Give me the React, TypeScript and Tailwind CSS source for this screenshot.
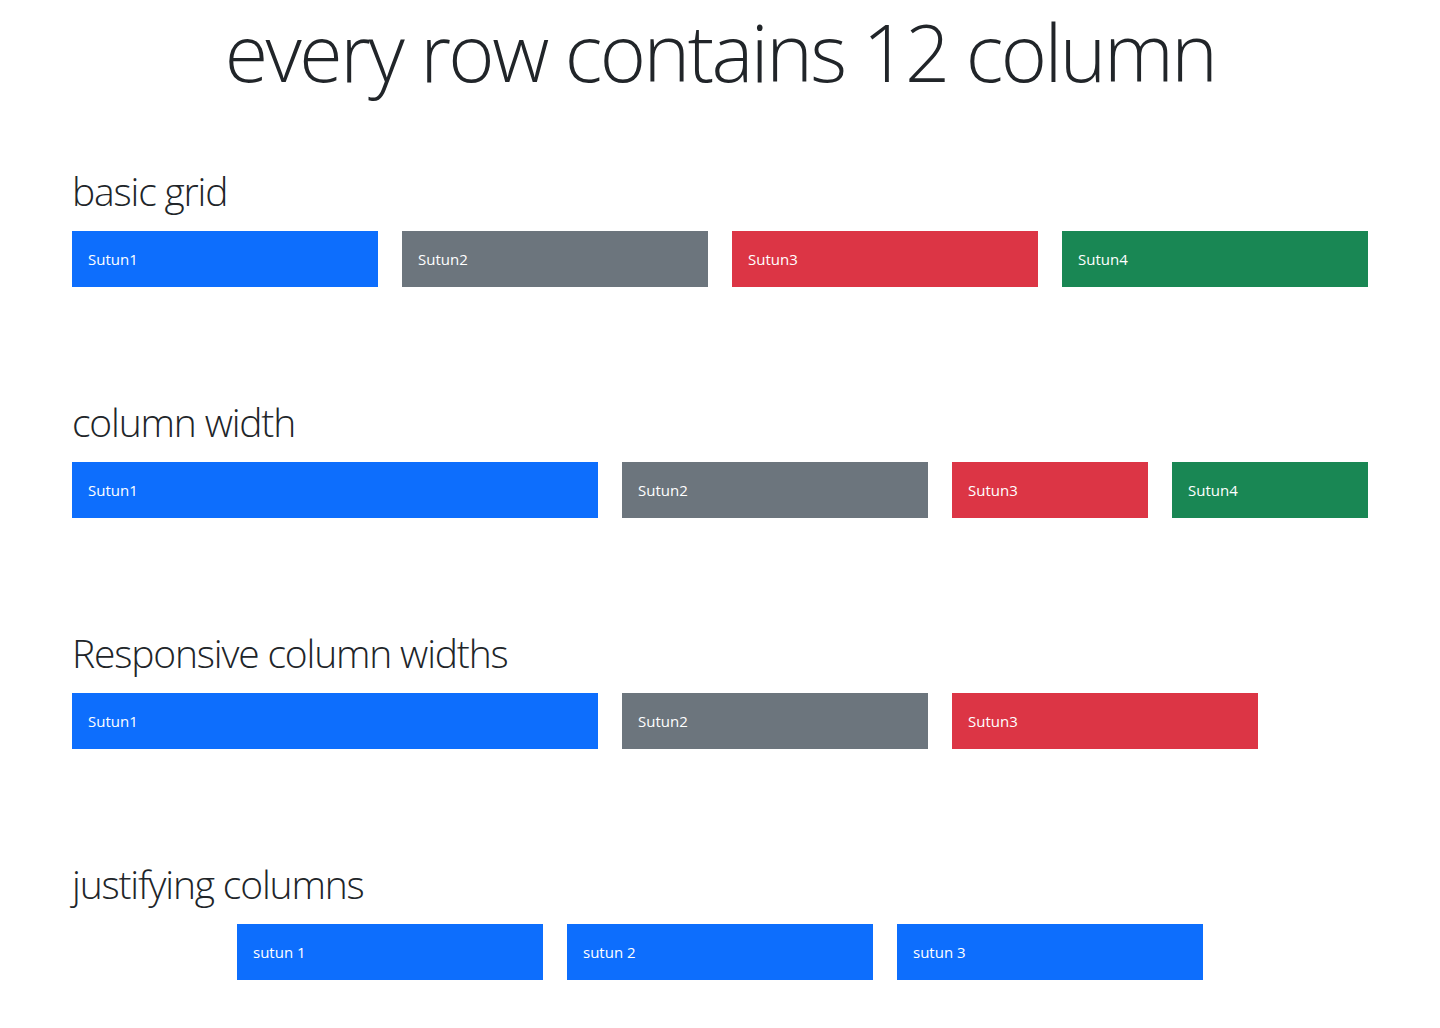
const colors = {
  blue: 'bg-[#0d6efd]',
  gray: 'bg-[#6c757d]',
  red: 'bg-[#dc3545]',
  green: 'bg-[#198754]',
}

type Col = { label: string; color: keyof typeof colors; span: string }

function Box({ label, color, className = '' }: { label: string; color: keyof typeof colors; className?: string }) {
  return (
    <div className={`${colors[color]} ${className} h-14 p-4 text-[15px] leading-6 text-white`}>{label}</div>
  )
}

function Heading({ children }: { children: string }) {
  return (
    <h2 className="mb-6 h-8 text-[39px] font-light leading-8 tracking-[-0.03em] text-[#212529]">{children}</h2>
  )
}

function Section({ title, cols, first = false }: { title: string; cols: Col[]; first?: boolean }) {
  return (
    <section className={first ? 'mt-[71px]' : 'mt-[119px]'}>
      <Heading>{title}</Heading>
      <div className="grid grid-cols-12 gap-6">
        {cols.map((c) => (
          <Box key={c.label} label={c.label} color={c.color} className={c.span} />
        ))}
      </div>
    </section>
  )
}

export default function App() {
  return (
    <div className="min-h-[1028px] bg-white font-['Open_Sans',sans-serif] text-[#212529]">
      <h1 className="h-[104px] text-center text-[79px] font-light leading-[104px] tracking-[-0.032em]">
        every row contains 12 column
      </h1>

      <div className="mx-auto w-[1296px]">
        <Section
          first
          title="basic grid"
          cols={[
            { label: 'Sutun1', color: 'blue', span: 'col-span-3' },
            { label: 'Sutun2', color: 'gray', span: 'col-span-3' },
            { label: 'Sutun3', color: 'red', span: 'col-span-3' },
            { label: 'Sutun4', color: 'green', span: 'col-span-3' },
          ]}
        />

        <Section
          title="column width"
          cols={[
            { label: 'Sutun1', color: 'blue', span: 'col-span-5' },
            { label: 'Sutun2', color: 'gray', span: 'col-span-3' },
            { label: 'Sutun3', color: 'red', span: 'col-span-2' },
            { label: 'Sutun4', color: 'green', span: 'col-span-2' },
          ]}
        />

        <Section
          title="Responsive column widths"
          cols={[
            { label: 'Sutun1', color: 'blue', span: 'col-span-5' },
            { label: 'Sutun2', color: 'gray', span: 'col-span-3' },
            { label: 'Sutun3', color: 'red', span: 'col-span-3' },
          ]}
        />

        {/* centered row */}
        <section className="mt-[119px]">
          <Heading>justifying columns</Heading>
          <div className="flex justify-center gap-6">
            <Box label="sutun 1" color="blue" className="w-[306px]" />
            <Box label="sutun 2" color="blue" className="w-[306px]" />
            <Box label="sutun 3" color="blue" className="w-[306px]" />
          </div>
        </section>
      </div>
    </div>
  )
}
